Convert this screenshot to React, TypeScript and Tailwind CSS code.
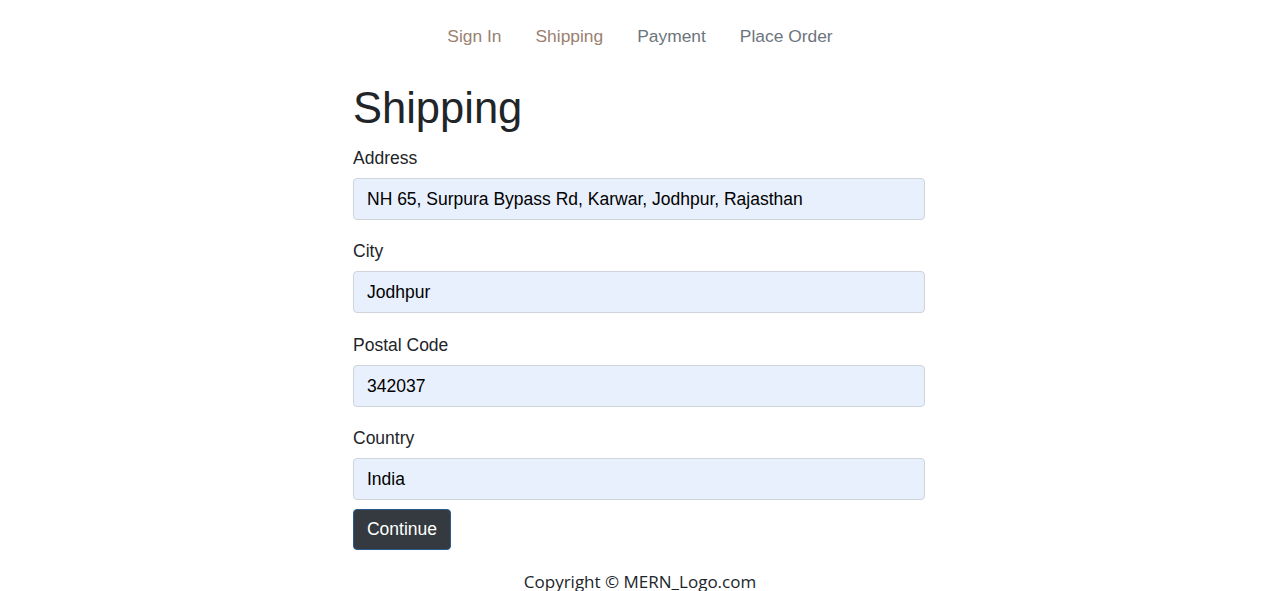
import React from "react";

const fields = [
  { label: "Address", value: "NH 65, Surpura Bypass Rd, Karwar, Jodhpur, Rajasthan" },
  { label: "City", value: "Jodhpur" },
  { label: "Postal Code", value: "342037" },
  { label: "Country", value: "India" },
];

export default function App() {
  return (
    <div className="min-h-[591px] bg-white text-[#212529]" style={{ fontFamily: '"Liberation Sans", Arial, sans-serif' }}>
      <nav className="flex justify-center pt-[24px] h-[72px]">
        <span className="px-[17px] text-[17.4px] leading-[24px] text-[#9b8171]">Sign In</span>
        <span className="px-[17px] text-[17.4px] leading-[24px] text-[#9b8171]">Shipping</span>
        <span className="px-[17px] text-[17.4px] leading-[24px] text-[#6c757d]">Payment</span>
        <span className="px-[17px] text-[17.4px] leading-[24px] text-[#6c757d]">Place Order</span>
      </nav>
      <div className="w-[572px] mx-[353px]">
        <h1 className="text-[43.5px] leading-[52px] h-[71px] pt-[10px] font-normal">Shipping</h1>
        {fields.map((f) => (
          <div key={f.label} className="h-[93.4px]">
            <div className="text-[17.5px] leading-[22px] h-[35px] pt-[4px]">{f.label}</div>
            <div className="h-[42px] rounded-[4px] border border-[#ced4da] bg-[#e8f0fe] px-[13px] flex items-center text-[17.5px] text-black">
              {f.value}
            </div>
          </div>
        ))}
        <div className="-mt-[8px]">
          <button className="h-[41px] w-[98px] rounded-[4px] border border-[#2b5b8c] bg-[#343a40] text-white text-[17.5px]">
            Continue
          </button>
        </div>
      </div>
      <footer className="text-center text-[17px] leading-[24px] mt-[20px] text-[#212529]" style={{ fontFamily: '"Open Sans", "Noto Sans", sans-serif' }}>
        Copyright © MERN_Logo.com
      </footer>
    </div>
  );
}
